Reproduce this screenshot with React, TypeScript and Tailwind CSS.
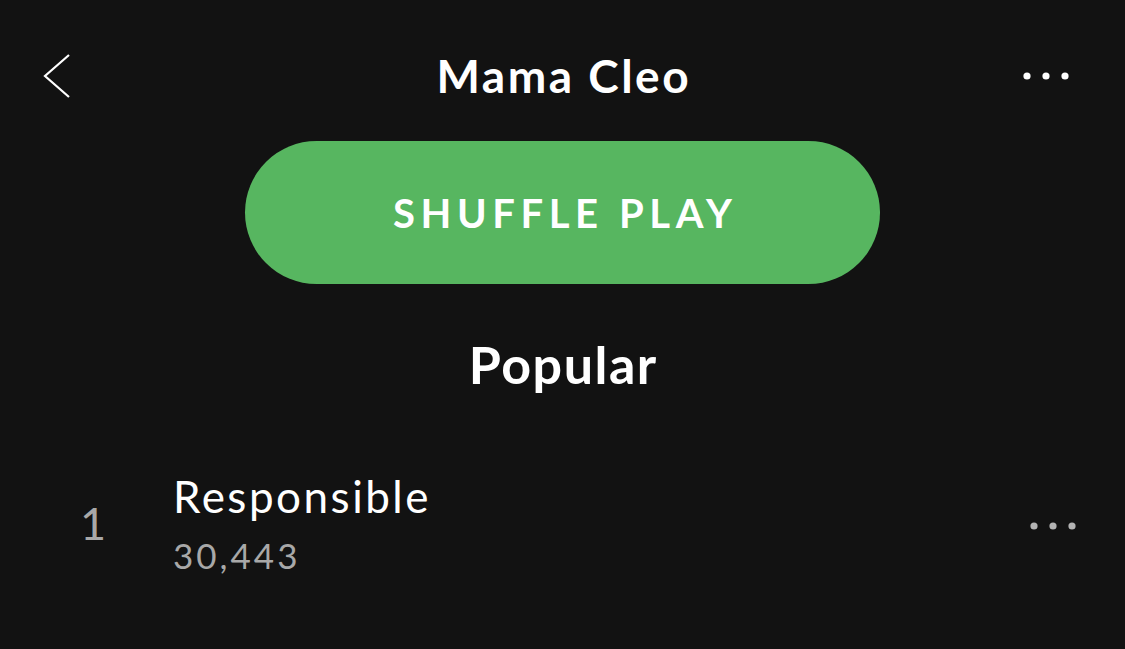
import React from 'react';

function Dots({ color }: { color: string }) {
  return (
    <svg width="48" height="10" viewBox="0 0 48 10" className={color}>
      <circle cx="5" cy="5" r="3.6" fill="currentColor" />
      <circle cx="24" cy="5" r="3.6" fill="currentColor" />
      <circle cx="43" cy="5" r="3.6" fill="currentColor" />
    </svg>
  );
}

function App() {
  return (
    <div className="min-h-screen w-full bg-[#121212] text-white font-['Lato','Liberation_Sans',sans-serif] overflow-hidden">
      {/* header */}
      <div className="grid grid-cols-[1fr_auto_1fr] items-center h-[141px] pt-[10px] px-[42px]">
        <svg width="30" height="46" viewBox="0 0 30 46" fill="none">
          <path d="M27 2 L3 23 L27 44" stroke="white" strokeWidth="2.2" />
        </svg>
        <h1 className="text-[46px] font-bold leading-none tracking-[2.5px] pl-[2.5px]">Mama Cleo</h1>
        <div className="flex justify-end pr-[13px]">
          <Dots color="text-white" />
        </div>
      </div>

      <div className="flex justify-center">
        <button className="w-[635px] h-[143px] rounded-full bg-[#57b660] text-white text-[40px] font-bold tracking-[0.14em] pl-[0.14em]">
          SHUFFLE PLAY
        </button>
      </div>

      <div className="flex justify-center pt-[54px]">
        <h2 className="text-[52px] font-bold leading-none tracking-[1.5px] pl-[1.5px]">Popular</h2>
      </div>

      <div className="flex items-center pt-[76px] pl-[80px] pr-[48px]">
        <span className="w-[93px] text-[45px] text-[#a8a8a8] leading-none">1</span>
        <div className="flex-1 flex flex-col">
          <span className="text-[44px] leading-[60px] tracking-[2.5px]">Responsible</span>
          <span className="text-[35px] leading-[50px] mt-[4px] tracking-[3px] text-[#a8a8a8]">30,443</span>
        </div>
        <div className="mt-[6px]">
          <Dots color="text-[#b3b3b3]" />
        </div>
      </div>
    </div>
  );
}

export default App;
